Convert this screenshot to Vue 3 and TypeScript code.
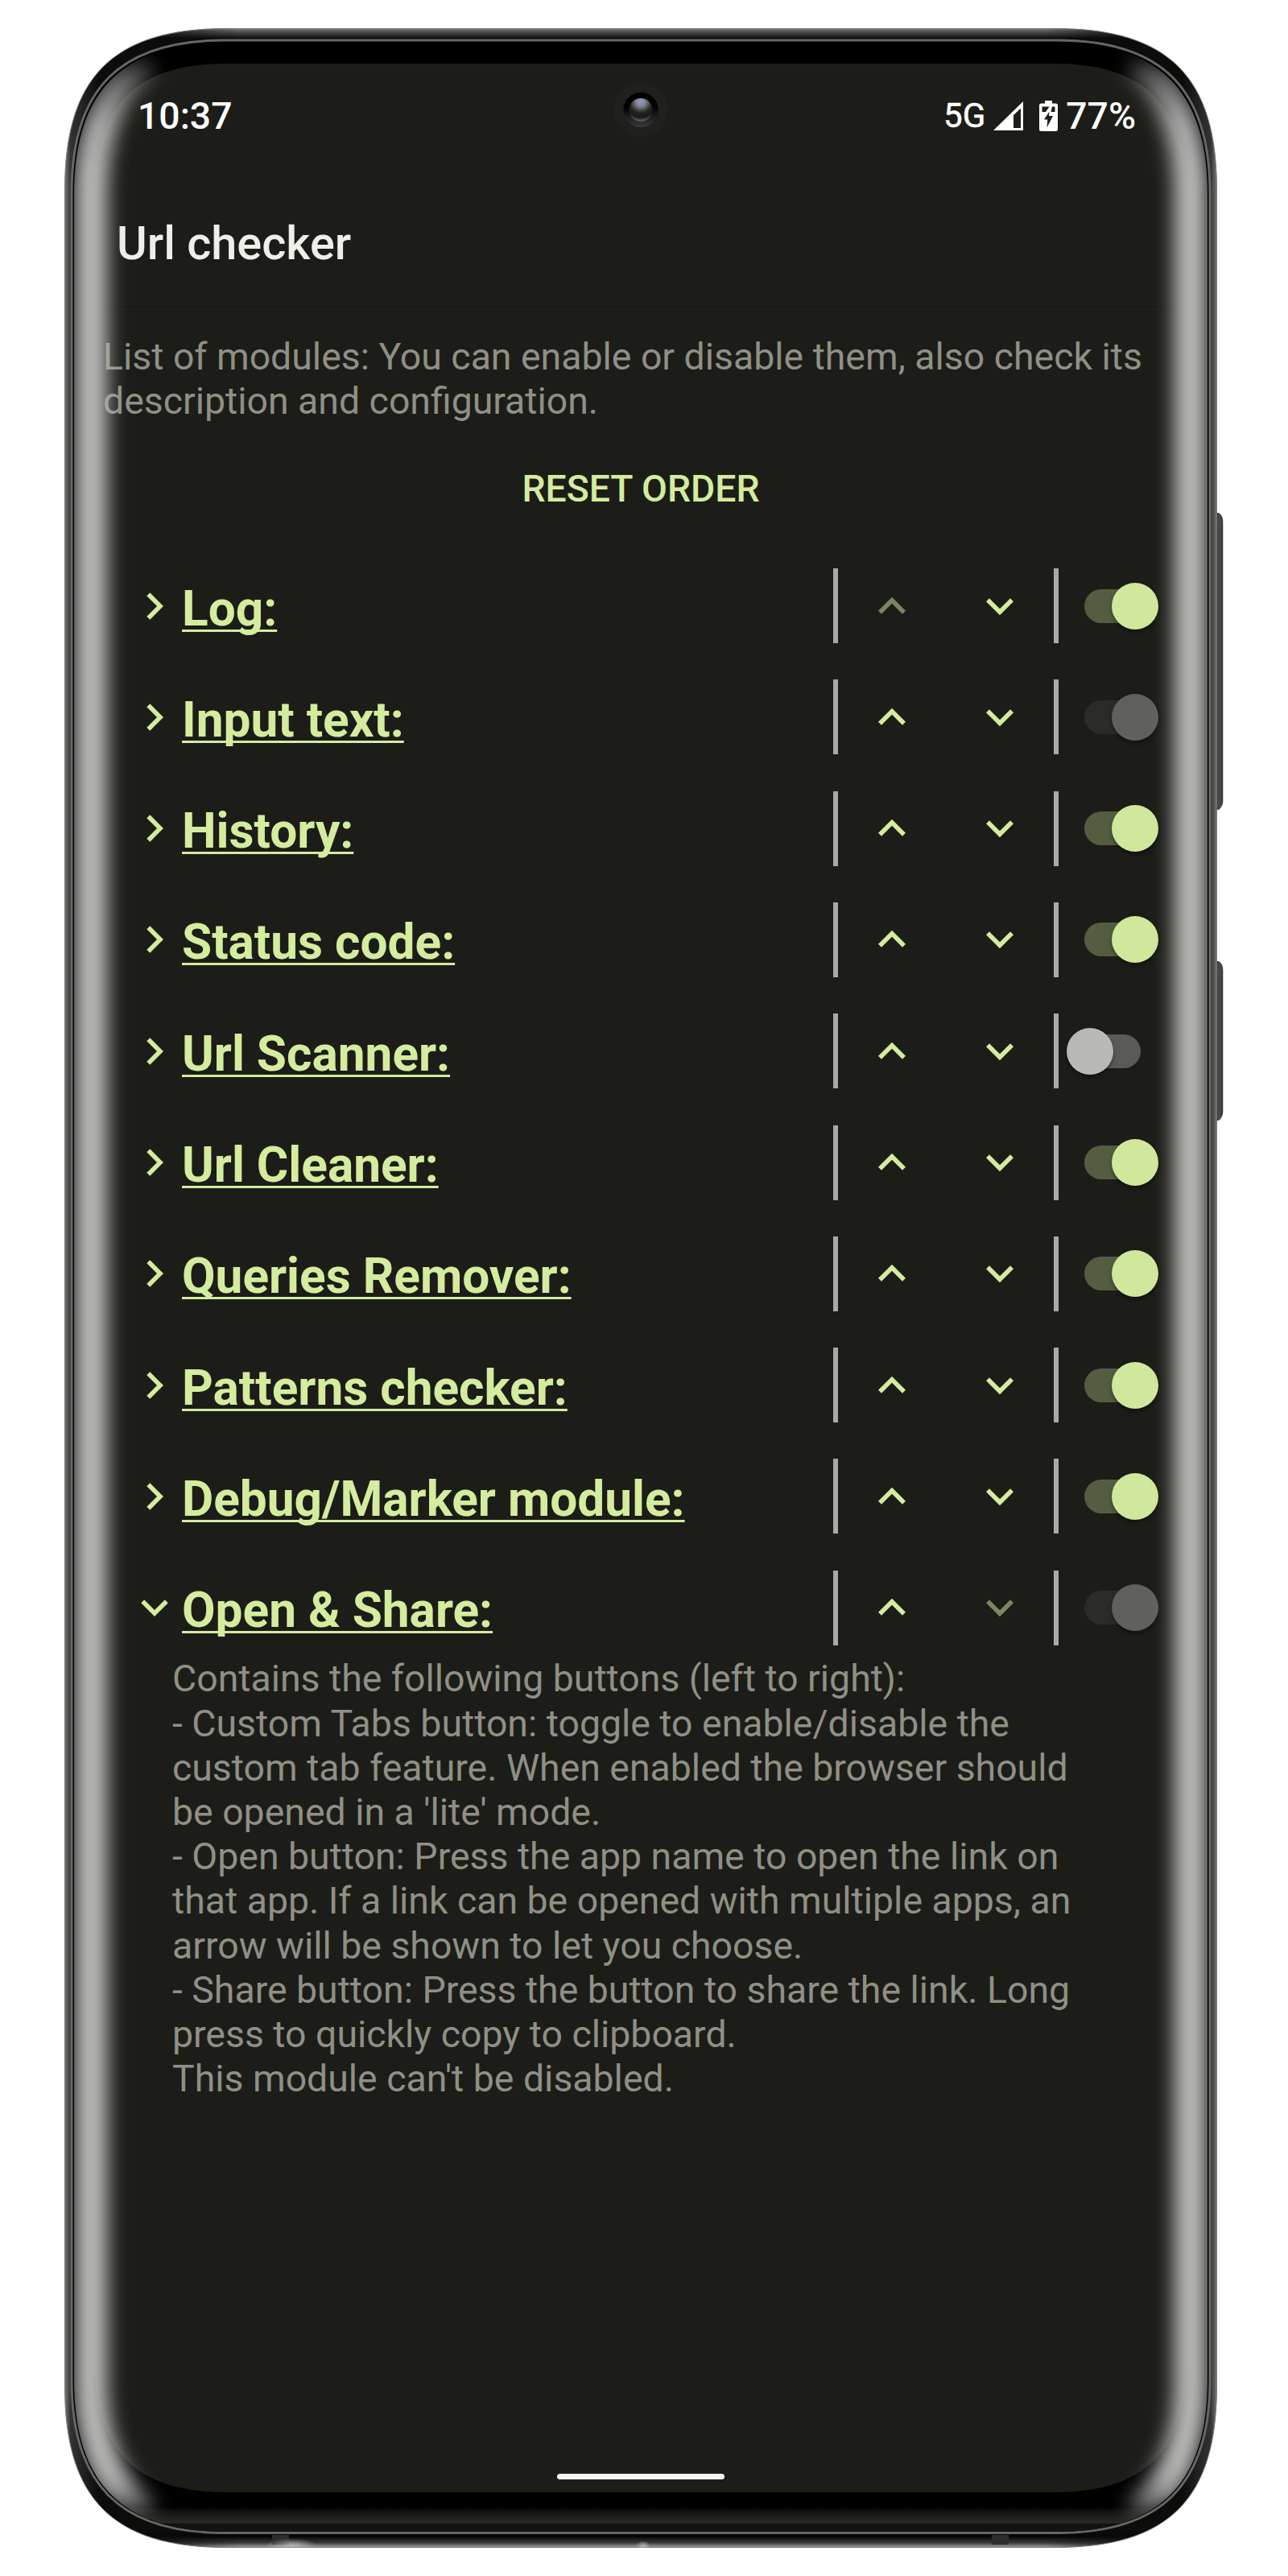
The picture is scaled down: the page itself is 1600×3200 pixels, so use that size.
<script setup lang="ts">
import { ref } from 'vue'

interface Module {
  name: string
  on: boolean
  locked?: boolean
  open?: boolean
}

const modules = ref<Module[]>([
  { name: 'Log:', on: true },
  { name: 'Input text:', on: true, locked: true },
  { name: 'History:', on: true },
  { name: 'Status code:', on: true },
  { name: 'Url Scanner:', on: false },
  { name: 'Url Cleaner:', on: true },
  { name: 'Queries Remover:', on: true },
  { name: 'Patterns checker:', on: true },
  { name: 'Debug/Marker module:', on: true },
  { name: 'Open & Share:', on: true, locked: true, open: true },
])

const description = [
  'Contains the following buttons (left to right):',
  '- Custom Tabs button: toggle to enable/disable the',
  'custom tab feature. When enabled the browser should',
  "be opened in a 'lite' mode.",
  '- Open button: Press the app name to open the link on',
  'that app. If a link can be opened with multiple apps, an',
  'arrow will be shown to let you choose.',
  '- Share button: Press the button to share the link. Long',
  'press to quickly copy to clipboard.',
  "This module can't be disabled.",
]

// Rounded rectangle with softened (squircle-like) corners:
// e is the corner extent, c the distance of the control points from the corner.
function squircle(l: number, t: number, r: number, b: number, e: number, c: number): string {
  return (
    `M${l + e} ${t}H${r - e}C${r - c} ${t} ${r} ${t + c} ${r} ${t + e}` +
    `V${b - e}C${r} ${b - c} ${r - c} ${b} ${r - e} ${b}` +
    `H${l + e}C${l + c} ${b} ${l} ${b - c} ${l} ${b - e}` +
    `V${t + e}C${l} ${t + c} ${l + c} ${t} ${l + e} ${t}Z`
  )
}

const body = squircle(80.5, 35.5, 1511.5, 3164.5, 200, 60)
const rim = squircle(89, 50, 1503, 3146.5, 190, 60)
const glass = squircle(92, 53, 1500, 3145, 188, 60)
const screen = squircle(117, 79, 1474, 3096, 165, 52)
</script>

<template>
  <div class="page">
    <svg class="layer" viewBox="0 0 1600 3200">
      <defs>
        <linearGradient id="side" x1="80" x2="1512" y1="0" y2="0" gradientUnits="userSpaceOnUse">
          <stop offset="0" stop-color="#7c7c7a" />
          <stop offset=".0055" stop-color="#333" />
          <stop offset=".03" stop-color="#0c0c0b" />
          <stop offset=".97" stop-color="#0c0c0b" />
          <stop offset=".9945" stop-color="#333" />
          <stop offset="1" stop-color="#7c7c7a" />
        </linearGradient>
        <linearGradient id="ends" x1="0" x2="0" y1="35" y2="3165" gradientUnits="userSpaceOnUse">
          <stop offset="0" stop-color="#8c8e8a" />
          <stop offset=".001" stop-color="#5c5d59" />
          <stop offset=".004" stop-color="#0c0c0b" />
          <stop offset=".006" stop-color="#0c0c0b" stop-opacity="0" />
          <stop offset=".993" stop-color="#000" stop-opacity="0" />
          <stop offset=".9955" stop-color="#050505" />
          <stop offset=".998" stop-color="#3a3a3a" />
          <stop offset="1" stop-color="#aaa" />
        </linearGradient>
        <linearGradient id="endmask" x1="80" x2="1512" y1="0" y2="0" gradientUnits="userSpaceOnUse">
          <stop offset=".05" stop-color="#000" />
          <stop offset=".15" stop-color="#fff" />
          <stop offset=".85" stop-color="#fff" />
          <stop offset=".95" stop-color="#000" />
        </linearGradient>
        <linearGradient id="chin" x1="0" x2="0" y1="3115" y2="3145" gradientUnits="userSpaceOnUse">
          <stop offset="0" stop-color="#000" />
          <stop offset=".1" stop-color="#0e0e0d" />
          <stop offset=".64" stop-color="#2a2a26" />
          <stop offset=".66" stop-color="#131313" />
          <stop offset="1" stop-color="#131313" />
        </linearGradient>
        <linearGradient id="key" x1="1511" x2="1520" y1="0" y2="0" gradientUnits="userSpaceOnUse">
          <stop offset="0" stop-color="#222" />
          <stop offset=".25" stop-color="#4a4c4a" />
          <stop offset=".7" stop-color="#444644" />
          <stop offset=".8" stop-color="#222" />
          <stop offset="1" stop-color="#b0b0b0" />
        </linearGradient>
        <radialGradient id="glint">
          <stop offset="0" stop-color="#c4c4c4" stop-opacity=".8" />
          <stop offset="1" stop-color="#c4c4c4" stop-opacity="0" />
        </radialGradient>
        <mask id="straight"><rect width="1600" height="3200" fill="url(#endmask)" /></mask>
        <clipPath id="glassclip"><path :d="glass" /></clipPath>
        <clipPath id="bodyclip"><path :d="body" /></clipPath>
      </defs>
      <path d="M1511 637h3q5 3 5.500 11v347q-.5 7-5.500 11h-3z" fill="url(#key)" />
      <path d="M1511 1194h3q5 3 5.500 11v176q-.5 7-5.500 11h-3z" fill="url(#key)" />
      <path :d="body" fill="url(#side)" />
      <path :d="body" fill="url(#ends)" mask="url(#straight)" />
      <path :d="body" fill="none" stroke="#777875" stroke-width="1" />
      <rect x="338" y="3149" width="21" height="12" fill="#2c2c2a" />
      <rect x="1232" y="3149" width="21" height="12" fill="#2c2c2a" />
      <g clip-path="url(#bodyclip)">
        <ellipse cx="362" cy="3162" rx="32" ry="9" fill="url(#glint)" />
        <ellipse cx="799" cy="3163" rx="9" ry="7" fill="url(#glint)" />
      </g>
      <path :d="rim" fill="#000" stroke="#666664" stroke-width="3" />
      <g clip-path="url(#glassclip)">
        <rect x="80" y="3115" width="1430" height="40" fill="url(#chin)" />
      </g>
      <path :d="screen" fill="#1c1d18" />
    </svg>

    <div class="phone">
      <header class="status">
        <span class="clock">10:37</span>
        <span class="network">5G</span>
        <svg class="signal" viewBox="0 0 37 36">
          <path d="M0 36 37 0V36ZM25 17V33H34V8.500Z" fill="#fff" fill-rule="evenodd" />
        </svg>
        <svg class="battery" viewBox="0 0 23 38">
          <path d="M7 0h9v3.500h4.500Q23 3.500 23 6v29.500q0 2.500-2.500 2.500h-18Q0 38 0 35.500V6q0-2.500 2.500-2.500H7Z" fill="#fff" />
          <path d="M3.500 7.500H12.500L8 14H3.500ZM16 7.500h3.500V14H14.500Z" fill="#1c1d18" />
          <path d="M12.500 13.500 6 23.500h4.300L9.500 33.500 17 19h-5Z" fill="#1c1d18" />
        </svg>
        <span class="percent">77%</span>
      </header>

      <h1 class="title">Url checker</h1>

      <p class="intro">List of modules: You can enable or disable them, also check its<br />description and configuration.</p>

      <button class="reset" type="button">RESET ORDER</button>

      <ul class="modules">
        <li v-for="(m, i) in modules" :key="m.name" class="module">
          <svg class="expand" :class="{ open: m.open }" viewBox="0 0 40 40">
            <path d="M12.300 5.200 27 20 12.300 34.800" />
          </svg>
          <span class="name">{{ m.name }}</span>
          <i class="bar"></i>
          <svg class="arrow" :class="{ off: i === 0 }" viewBox="0 0 40 40">
            <path d="M5 27.700 20 12.700 35 27.700" />
          </svg>
          <svg class="arrow down" :class="{ off: i === modules.length - 1 }" viewBox="0 0 40 40">
            <path d="M5 12.200 20 27.200 35 12.200" />
          </svg>
          <i class="bar"></i>
          <span class="switch" :class="{ on: m.on, locked: m.locked }"><i class="knob"></i></span>
        </li>
      </ul>

      <p class="description"><template v-for="line in description" :key="line">{{ line }}<br /></template></p>

      <div class="pill"></div>
    </div>

    <svg class="layer glare" viewBox="0 0 1600 3200">
      <defs>
        <filter id="soft" x="0" y="0" width="1600" height="3200" filterUnits="userSpaceOnUse">
          <feGaussianBlur stdDeviation="11.5" />
        </filter>
        <linearGradient id="fade" x1="0" x2="0" y1="60" y2="3135" gradientUnits="userSpaceOnUse">
          <stop offset="0" stop-color="#b9b9b8" stop-opacity="0" />
          <stop offset=".0055" stop-color="#b9b9b8" stop-opacity=".15" />
          <stop offset=".012" stop-color="#b9b9b8" stop-opacity=".55" />
          <stop offset=".03" stop-color="#b9b9b8" stop-opacity=".92" />
          <stop offset=".05" stop-color="#b9b9b8" />
          <stop offset=".975" stop-color="#b9b9b8" />
          <stop offset=".985" stop-color="#b9b9b8" stop-opacity=".92" />
          <stop offset=".992" stop-color="#b9b9b8" stop-opacity=".55" />
          <stop offset=".996" stop-color="#b9b9b8" stop-opacity=".2" />
          <stop offset="1" stop-color="#b9b9b8" stop-opacity="0" />
        </linearGradient>
        <clipPath id="glareclip"><path :d="glass" /></clipPath>
        <linearGradient id="ring" x1="0" x2="0" y1="0" y2="1">
          <stop offset=".4" stop-color="#000" />
          <stop offset="1" stop-color="#3a3a3a" />
        </linearGradient>
        <radialGradient id="lens" cx=".5" cy=".15" r=".8">
          <stop offset="0" stop-color="#8d9cba" />
          <stop offset=".22" stop-color="#8388a0" />
          <stop offset=".36" stop-color="#666" />
          <stop offset=".6" stop-color="#222" />
          <stop offset=".85" stop-color="#1a1a1a" />
          <stop offset="1" stop-color="#555" />
        </radialGradient>
      </defs>
      <g clip-path="url(#glareclip)">
        <g filter="url(#soft)" fill="none" stroke="url(#fade)" stroke-width="42">
          <path d="M182 72C136 103 112.500 168 112.500 240V2960C112.500 3032 136 3096 182 3127" />
          <path d="M1410 72C1456 103 1479.500 168 1479.500 240V2960C1479.500 3032 1456 3096 1410 3127" />
        </g>
      </g>
      <circle cx="796" cy="136.500" r="33.500" fill="#20201f" />
      <circle cx="796" cy="136.500" r="21.700" fill="url(#ring)" />
      <circle cx="796" cy="136.500" r="14.500" fill="url(#lens)" />
    </svg>
  </div>
</template>

<style>
body {
  background: #fff;
}
</style>

<style scoped>
.page {
  position: relative;
  width: 1600px;
  height: 3200px;
  overflow: hidden;
  background: #fff;
  font-family: Roboto, 'Liberation Sans', sans-serif;
}

.layer {
  position: absolute;
  inset: 0;
  width: 1600px;
  height: 3200px;
}

.glare {
  pointer-events: none;
}

.phone {
  position: relative;
  box-sizing: border-box;
  display: flex;
  flex-direction: column;
  width: 1357px;
  height: 3096px;
  margin-left: 117px;
  padding-top: 79px;
}

.status {
  display: flex;
  align-items: center;
  height: 130px;
  padding: 0 63px 0 54px;
  color: #fff;
  font-size: 46.300px;
  font-weight: 500;
  line-height: 130px;
}

.clock {
  margin-right: auto;
}

.network {
  margin-right: 10px;
  font-size: 42px;
  font-weight: 400;
  line-height: 126px;
  -webkit-text-stroke: 0.5px #fff;
}

.signal {
  width: 37px;
  height: 36px;
  margin-right: 20px;
}

.battery {
  width: 23px;
  height: 38px;
  margin-right: 10px;
}

.title {
  box-sizing: border-box;
  height: 173px;
  margin: 0;
  padding: 59px 0 0 28px;
  border-bottom: 2px solid #191a16;
  color: #efeee8;
  font-size: 57.700px;
  font-weight: 500;
  line-height: 68px;
}

.intro {
  margin: 34px 0 0 11px;
  color: #8f9085;
  font-size: 46.400px;
  line-height: 55.200px;
  white-space: nowrap;
}

.reset {
  align-self: center;
  width: 340px;
  height: 100px;
  margin-top: 31px;
  padding: 0;
  border: 0;
  background: none;
  color: #d4ec9e;
  font: 500 46.300px/100px Roboto, 'Liberation Sans', sans-serif;
  text-indent: 1px;
  white-space: nowrap;
}

.modules {
  margin: 26px 0 0;
  padding: 0;
  list-style: none;
}

.module {
  display: flex;
  align-items: center;
  height: 138.300px;
}

.expand,
.arrow {
  flex: none;
  width: 40px;
  height: 40px;
  fill: none;
  stroke: #d4ec9e;
  stroke-width: 5.600;
}

.expand {
  margin-left: 55px;
}

.expand.open {
  transform: rotate(90deg);
}

.name {
  flex: none;
  width: 809px;
  margin-left: 14px;
  padding-top: 8px;
  color: #d4ec9e;
  font-size: 60.350px;
  font-weight: 700;
  line-height: 70px;
  text-decoration: underline;
  text-decoration-thickness: 3px;
  text-decoration-skip-ink: none;
  text-underline-offset: 5px;
  white-space: nowrap;
}

.bar {
  flex: none;
  width: 6px;
  height: 93px;
  background: #a9a9a8;
}

.arrow {
  margin-left: 47px;
}

.arrow.down {
  margin: 0 47px 0 94px;
}

.arrow.off {
  stroke: #7b875f;
}

.switch {
  flex: none;
  display: flex;
  align-items: center;
  width: 70px;
  height: 42px;
  margin-left: 32px;
  border-radius: 21px;
  background: #5a5b57;
}

.knob {
  flex: none;
  width: 58px;
  height: 58px;
  margin-left: -22px;
  border-radius: 50%;
  background: #b9b9b7;
  box-shadow: 0 3px 5px rgba(0, 0, 0, 0.4);
}

.switch.on {
  background: #555d41;
}

.switch.on .knob {
  margin-left: 34px;
  background: #cfe89b;
}

.switch.locked {
  background: #2b2c28;
}

.switch.locked .knob {
  background: #60605e;
}

.description {
  margin: -8px 0 0 97px;
  color: #8f9085;
  font-size: 46.400px;
  line-height: 55.200px;
  white-space: nowrap;
}

.pill {
  align-self: center;
  width: 208px;
  height: 7px;
  margin: auto 0 16px;
  border-radius: 3.500px;
  background: #f4f4f2;
}
</style>
